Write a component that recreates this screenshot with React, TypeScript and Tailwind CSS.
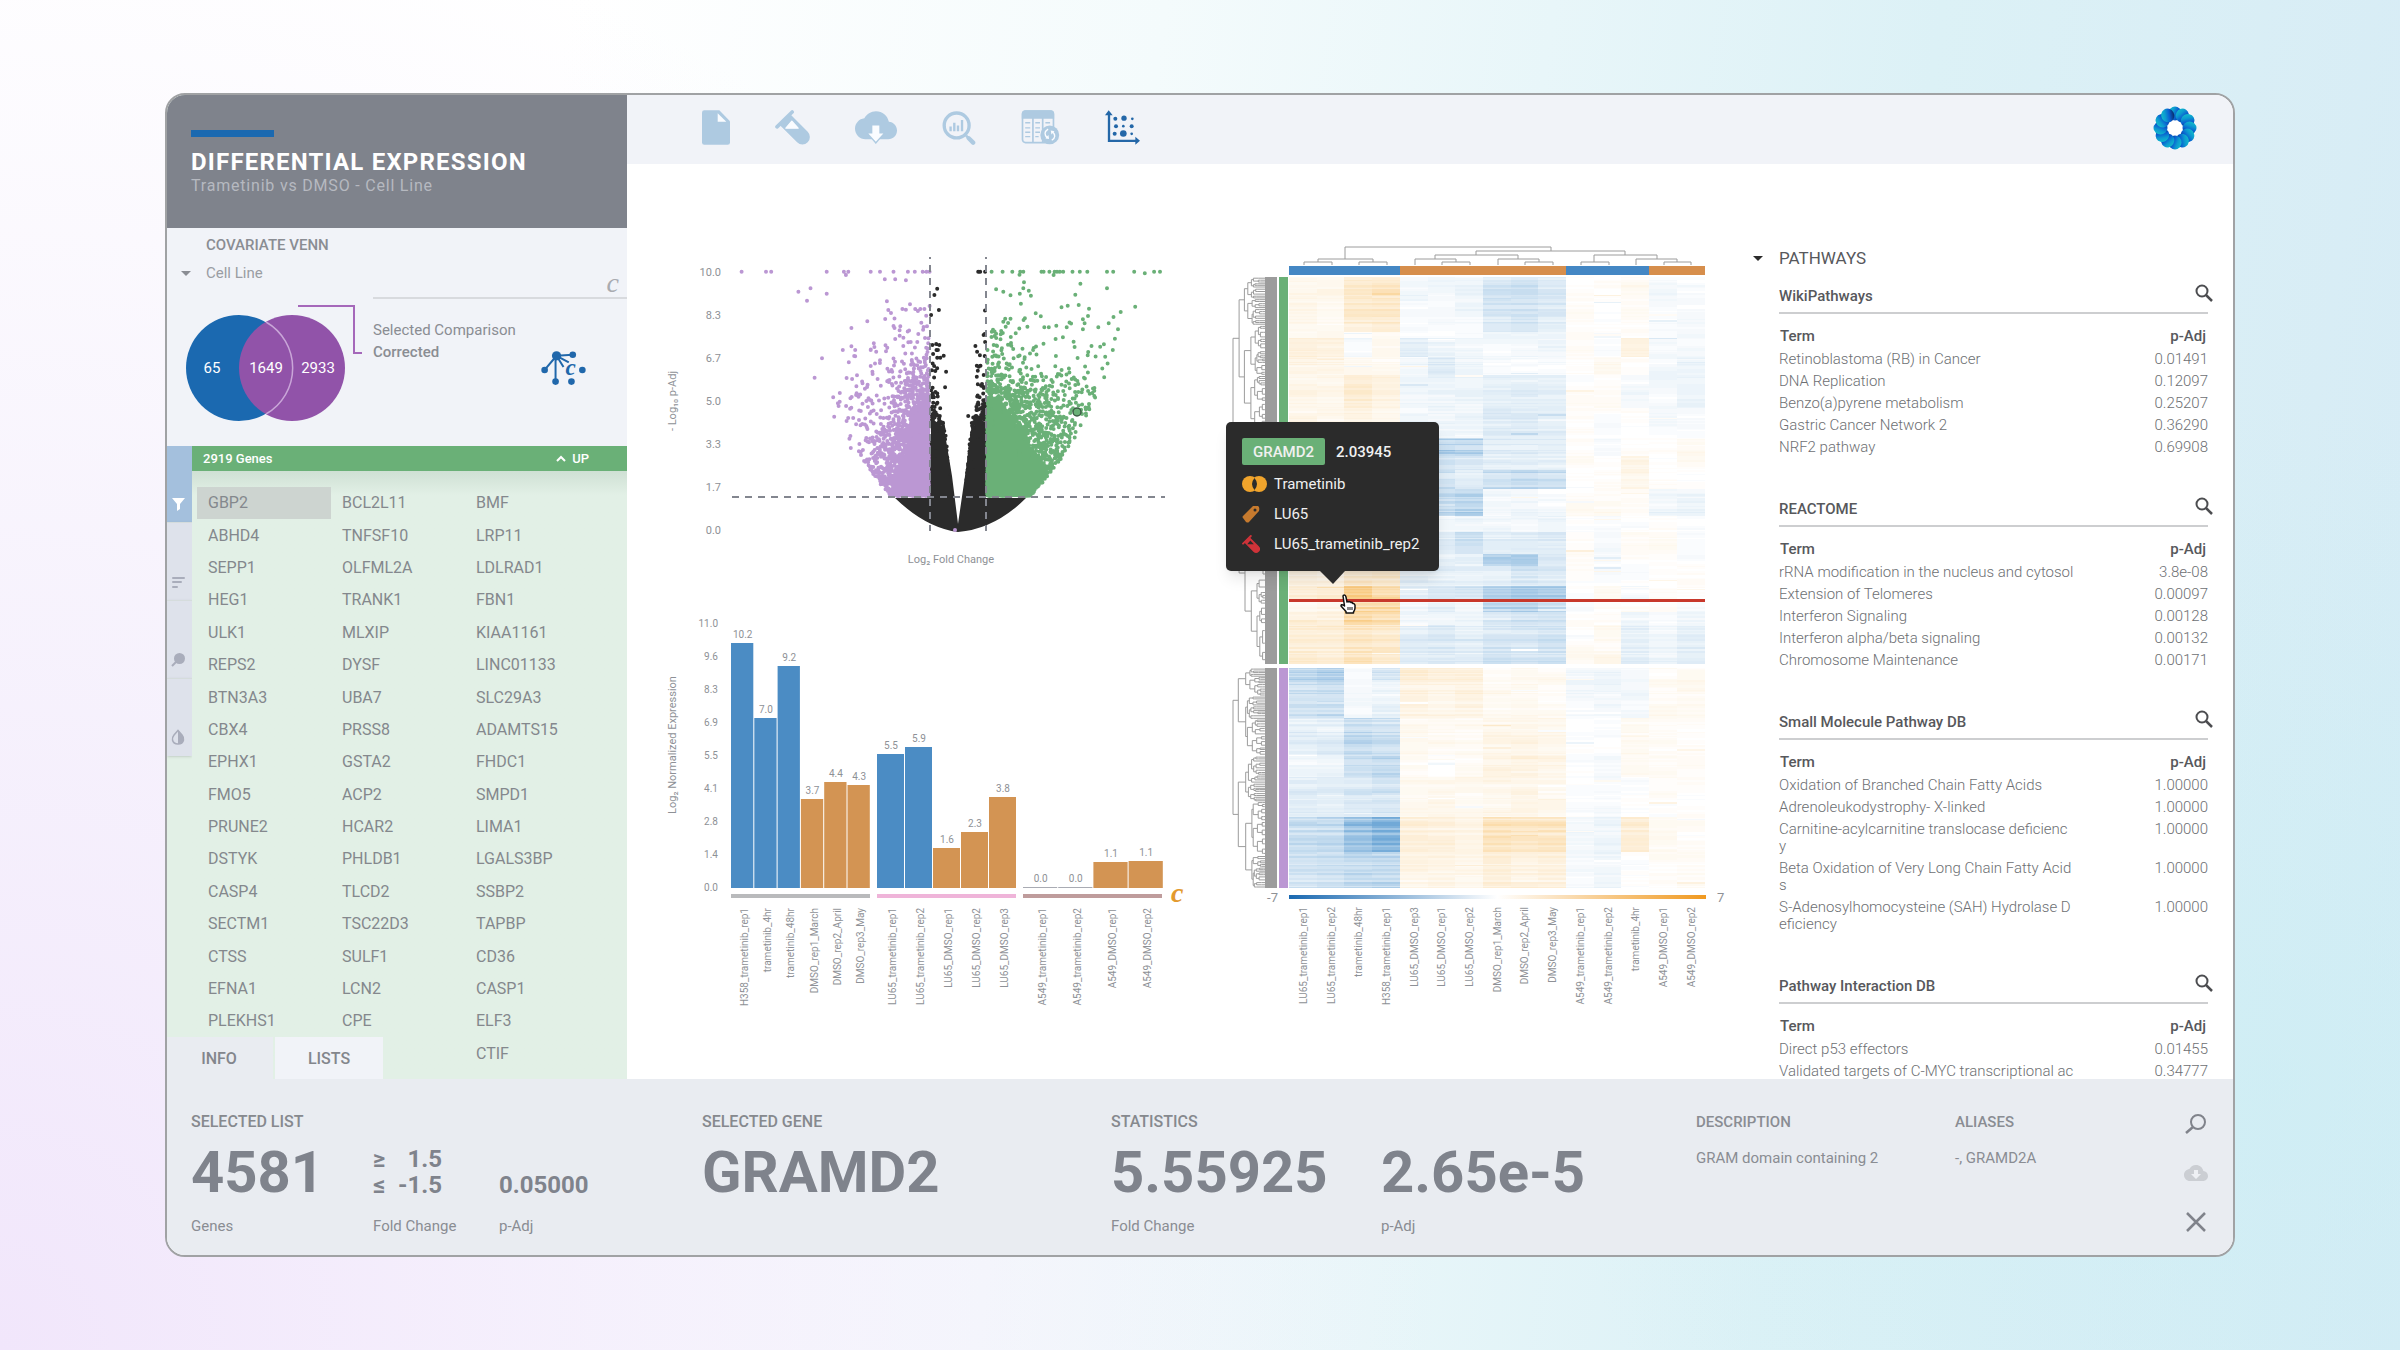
import type { ReactNode } from 'react';

/* ---------- shared ---------- */

type IconProps = { className?: string };

// Small seeded generator so that the charts are stable between renders
const createRandom = (seed: number) => {
  let state = seed;
  return () => {
    state = (state * 1664525 + 1013904223) % 4294967296;
    return state / 4294967296;
  };
};

const dotPath = (points: number[][]) =>
  points.map(([x, y]) => `M${x.toFixed(1)} ${y.toFixed(1)}h0`).join('');

/* ---------- data ---------- */

const genes = [
  ['GBP2', 'BCL2L11', 'BMF'],
  ['ABHD4', 'TNFSF10', 'LRP11'],
  ['SEPP1', 'OLFML2A', 'LDLRAD1'],
  ['HEG1', 'TRANK1', 'FBN1'],
  ['ULK1', 'MLXIP', 'KIAA1161'],
  ['REPS2', 'DYSF', 'LINC01133'],
  ['BTN3A3', 'UBA7', 'SLC29A3'],
  ['CBX4', 'PRSS8', 'ADAMTS15'],
  ['EPHX1', 'GSTA2', 'FHDC1'],
  ['FMO5', 'ACP2', 'SMPD1'],
  ['PRUNE2', 'HCAR2', 'LIMA1'],
  ['DSTYK', 'PHLDB1', 'LGALS3BP'],
  ['CASP4', 'TLCD2', 'SSBP2'],
  ['SECTM1', 'TSC22D3', 'TAPBP'],
  ['CTSS', 'SULF1', 'CD36'],
  ['EFNA1', 'LCN2', 'CASP1'],
  ['PLEKHS1', 'CPE', 'ELF3'],
  ['SLC15A3', '', 'CTIF'],
];

const pathways = [
  {
    name: 'WikiPathways',
    rows: [
      ['Retinoblastoma (RB) in Cancer', '0.01491'],
      ['DNA Replication', '0.12097'],
      ['Benzo(a)pyrene metabolism', '0.25207'],
      ['Gastric Cancer Network 2', '0.36290'],
      ['NRF2 pathway', '0.69908'],
    ],
  },
  {
    name: 'REACTOME',
    rows: [
      ['rRNA modification in the nucleus and cytosol', '3.8e-08'],
      ['Extension of Telomeres', '0.00097'],
      ['Interferon Signaling', '0.00128'],
      ['Interferon alpha/beta signaling', '0.00132'],
      ['Chromosome Maintenance', '0.00171'],
    ],
  },
  {
    name: 'Small Molecule Pathway DB',
    rows: [
      ['Oxidation of Branched Chain Fatty Acids', '1.00000'],
      ['Adrenoleukodystrophy- X-linked', '1.00000'],
      ['Carnitine-acylcarnitine translocase deficienc\ny', '1.00000'],
      ['Beta Oxidation of Very Long Chain Fatty Acid\ns', '1.00000'],
      ['S-Adenosylhomocysteine (SAH) Hydrolase D\neficiency', '1.00000'],
    ],
  },
  {
    name: 'Pathway Interaction DB',
    rows: [
      ['Direct p53 effectors', '0.01455'],
      ['Validated targets of C-MYC transcriptional ac', '0.34777'],
    ],
  },
];

/* ---------- icons ---------- */

const FileIcon = ({ className }: IconProps) => (
  <svg className={className} viewBox="0 0 84 104" fill="currentColor">
    <path d="M7 0H52L84 33V97a7 7 0 0 1-7 7H7a7 7 0 0 1-7-7V7a7 7 0 0 1 7-7z" />
    <path d="M47 9V35H73z" fill="#fafcff" />
  </svg>
);

const TubeIcon = ({ className }: IconProps) => (
  <svg className={className} viewBox="0 0 106 104" fill="currentColor">
    <path d="M6 50L52 5" stroke="currentColor" strokeWidth="11" strokeLinecap="round" />
    <path d="M15 45L47 13L99 65A22.6 22.6 0 0 1 67 97Z" />
    <path d="M33 54L51 33L70 54z" fill="#fafcff" stroke="#fafcff" strokeWidth="4" strokeLinejoin="round" />
  </svg>
);

const CloudIcon = ({ className }: IconProps) => (
  <svg className={className} viewBox="0 0 126 98" fill="currentColor">
    <path
      transform="translate(0 -21) scale(5.25)"
      d="M19.35 10.04C18.67 6.59 15.64 4 12 4 9.11 4 6.6 5.64 5.35 8.04 2.34 8.36 0 10.91 0 14c0 3.31 2.69 6 6 6h13c2.76 0 5-2.24 5-5 0-2.64-2.05-4.78-4.65-4.96z"
    />
    <path d="M40 67L62.500 94L85 67z" stroke="currentColor" strokeWidth="6" />
    <path d="M52 43H73V67H85L62.500 92L40 67H52z" fill="#fafcff" />
  </svg>
);

const AnalyzeIcon = ({ className }: IconProps) => (
  <svg className={className} viewBox="0 0 98 104" fill="none" stroke="currentColor">
    <circle cx="42" cy="46" r="37" strokeWidth="10" />
    <path d="M70 76L76 82" strokeWidth="8" />
    <path d="M78 84L91 97" strokeWidth="13" strokeLinecap="round" />
    <path d="M24 63V49M35 63V38M46 63V46M58 63V30" strokeWidth="7" />
  </svg>
);

const TableIcon = ({ className }: IconProps) => (
  <svg className={className} viewBox="0 0 113 104" fill="none" stroke="currentColor">
    <rect x="3" y="3" width="92" height="94" rx="9" strokeWidth="5" />
    <path d="M1 26V12Q1 1 12 1H86Q97 1 97 12V26z" fill="currentColor" stroke="none" />
    <path d="M34 24V97M63 24V97" strokeWidth="5" />
    <path
      d="M11 38h15M11 53h15M11 66h15M11 79h15M41 38h14M41 53h14M41 66h14M41 79h10M71 38h14"
      strokeWidth="4"
    />
    <circle cx="84" cy="74" r="28" fill="currentColor" stroke="none" />
    <path d="M79 57Q62 68 77 84M90 90Q107 79 91 63" stroke="#fafcff" strokeWidth="4" />
    <path d="M71 84L82 86L80 74zM98 63L87 61L89 73z" fill="#fafcff" stroke="none" />
  </svg>
);

const ScatterIcon = ({ className }: IconProps) => (
  <svg className={className} viewBox="0 0 105 104" fill="currentColor">
    <path d="M12 8V92H94" fill="none" stroke="currentColor" strokeWidth="7" />
    <path d="M0 15L11 0L23 15zM91 80L105 92L91 104z" />
    <circle cx="31" cy="26" r="6" />
    <circle cx="57" cy="24" r="8" />
    <circle cx="82" cy="26" r="4" />
    <circle cx="33" cy="48" r="6" />
    <circle cx="55" cy="48" r="4" />
    <circle cx="80" cy="48" r="6" />
    <circle cx="29" cy="71" r="6" />
    <circle cx="55" cy="70" r="10" />
    <circle cx="80" cy="71" r="4" />
  </svg>
);

const LogoIcon = ({ className }: IconProps) => (
  <svg className={className} viewBox="-22 -22 44 44">
    <defs>
      <linearGradient id="petal" x1="0" y1="0.200" x2="1" y2="0.600">
        <stop offset="0" stopColor="#15bfca" />
        <stop offset="0.350" stopColor="#0c9bd0" />
        <stop offset="0.650" stopColor="#0a5fd0" />
        <stop offset="1" stopColor="#0a2a66" />
      </linearGradient>
    </defs>
    <circle r="21" fill="#fff" />
    {Array.from({ length: 12 }, (_, i) => (
      <ellipse key={i} cx="0" cy="-14.500" rx="6.500" ry="7" fill="url(#petal)" transform={`rotate(${i * 30})`} />
    ))}
  </svg>
);

const NetworkIcon = ({ className }: IconProps) => (
  <svg className={className} viewBox="0 0 136 102" fill="currentColor">
    <path d="M47 14L96 11M47 14L11 57M44 14V92M47 14L68 48M47 14L84 34" fill="none" stroke="currentColor" strokeWidth="6" />
    <circle cx="47" cy="14" r="14" />
    <circle cx="96" cy="11" r="10" />
    <circle cx="11" cy="57" r="10" />
    <circle cx="44" cy="92" r="10" />
    <circle cx="92" cy="92" r="10" />
    <circle cx="125" cy="57" r="10" />
    <text x="74" y="72" fontSize="70" stroke="#f1f3f8" strokeWidth="10" paintOrder="stroke" className="[font-family:'Liberation_Serif',serif] font-bold italic">
      c
    </text>
  </svg>
);

const SearchIcon = ({ className }: IconProps) => (
  <svg className={className} viewBox="0 0 18 18" fill="none" stroke="currentColor">
    <circle cx="7" cy="7" r="5.500" strokeWidth="2" />
    <path d="M11 11L17 17" strokeWidth="2.500" />
  </svg>
);

const CaretIcon = ({ className }: IconProps) => (
  <svg className={className} viewBox="0 0 10 5" fill="currentColor">
    <path d="M0 0H10L5 5z" />
  </svg>
);

const FunnelIcon = () => (
  <svg className="h-[13px] w-[13px]" viewBox="0 0 13 13" fill="#fff">
    <path d="M0 0H13L8 6V11L5 13V6z" />
  </svg>
);

const SortIcon = () => (
  <svg className="h-[13px] w-[13px]" viewBox="0 0 13 13" fill="none" stroke="currentColor" strokeWidth="2" strokeLinecap="round">
    <path d="M1 2H12M1 6H9M1 11H5" />
  </svg>
);

const LensIcon = () => (
  <svg className="h-[14px] w-[14px]" viewBox="0 0 14 14" fill="currentColor">
    <circle cx="8.500" cy="5.500" r="5.500" />
    <path d="M5 9L1 13" stroke="currentColor" strokeWidth="2" />
  </svg>
);

const ContrastIcon = () => (
  <svg className="h-[16px] w-[14px]" viewBox="0 0 14 16">
    <path d="M7 1.500L11 6Q13 8.500 12.500 11A5.600 5 0 0 1 1.500 11Q1 8.500 3 6z" fill="none" stroke="currentColor" strokeWidth="1.500" />
    <path d="M7 1L11 6Q13 8.500 12.500 11A5.600 5 0 0 1 7 15z" fill="currentColor" />
  </svg>
);

/* ---------- volcano plot ---------- */

const fromRaw = ([x, y]: number[]) => [x / 2.904 - 10, y / 3 - 10];

const downOutliers = [
  [266, 125], [337, 125], [352, 125], [513, 125], [563, 125], [576, 125], [569, 135], [641, 125], [668, 125], [707, 125],
  [749, 125], [769, 125], [792, 125], [803, 125], [812, 125], [682, 148], [712, 148], [743, 151], [466, 175], [431, 185],
  [456, 212], [513, 191], [688, 214], [755, 223], [692, 240], [700, 249], [733, 237], [743, 239], [770, 237], [778, 243],
  [785, 237], [797, 237], [812, 228], [683, 267], [631, 274], [585, 294], [710, 294], [727, 289], [788, 278], [802, 257],
  [793, 299], [725, 317], [736, 323], [712, 327], [757, 336], [779, 312], [650, 340], [585, 349], [560, 360], [596, 379],
  [684, 346], [641, 360], [657, 365], [478, 443], [587, 447], [532, 502], [551, 515], [535, 560], [571, 573], [582, 505],
  [600, 490], [617, 460], [641, 408], [668, 391], [581, 536], [617, 521], [624, 476], [579, 626], [583, 654], [608, 642],
];

const upOutliers = [
  [992, 125], [1024, 125], [1052, 125], [1075, 125], [1084, 125], [1137, 125], [1143, 125], [1160, 125], [1175, 125],
  [1182, 125], [1190, 125], [1200, 125], [1227, 125], [1248, 125], [1270, 125], [1327, 125], [1345, 125], [1406, 125],
  [1437, 130], [1464, 125], [1481, 125], [1172, 135], [1073, 134], [1086, 157], [1084, 175], [1100, 182], [1106, 197],
  [1005, 178], [1026, 185], [1047, 196], [1074, 191], [1077, 221], [1250, 161], [1235, 194], [1327, 175], [1195, 232],
  [1213, 227], [1245, 225], [1275, 236], [1272, 258], [1257, 268], [1262, 280], [1257, 298], [1409, 230], [1367, 246],
  [1346, 261], [1332, 280], [1302, 292], [1359, 298], [1350, 326], [1318, 343], [1344, 360], [1322, 380], [1282, 348],
  [1271, 376], [1120, 250], [1135, 259], [1085, 270], [1047, 266], [1026, 275], [1033, 290], [1096, 290], [1145, 292],
  [1158, 292], [1180, 287], [1210, 292], [996, 299], [1020, 303], [1062, 310], [1199, 322], [1178, 327], [1230, 335],
];

const restOutliers = [
  [953, 125], [959, 125], [973, 125], [834, 176], [826, 195], [839, 240], [972, 312], [973, 336], [945, 348], [950, 365],
  [820, 345], [831, 342], [840, 345], [836, 360], [853, 377], [834, 383], [843, 383], [822, 372], [860, 425], [958, 376],
  [972, 378], [825, 408], [834, 415], [949, 407], [952, 422], [949, 440], [857, 472], [952, 463], [924, 558],
];

const scatter = (count: number, seed: number, spread: number, lineX: number, side: number, reach: number) => {
  const random = createRandom(seed);
  const points: number[][] = [];
  while (points.length < count) {
    const h = 36 - Math.log(1 - random()) * 56;
    const d = -Math.log(1 - random()) * (h < 130 ? spread : spread * 1.15);
    const limit = Math.min(11.9 * Math.sqrt(h), 150) * reach - 28;
    // Thins out towards the top of the plot
    const kept = random() < Math.exp((145 - h) / 35);
    if (h < 215 && d < limit && kept) points.push([lineX + side * (d + 1), 292 - h]);
  }
  return points;
};

const scatterRest = () => {
  const random = createRandom(77);
  const points: number[][] = [];
  while (points.length < 1300) {
    const h = 36 - Math.log(1 - random()) * 50;
    const inner = 4 + h * 0.085;
    const d = h < 115 ? random() : random() * random();
    const side = random() < 0.5 ? -1 : 1;
    if (random() < Math.exp((115 - h) / 25)) points.push([298 + side * (27 - d * (27 - inner)), 292 - h]);
  }
  return points;
};

const downDots = dotPath([...downOutliers.map(fromRaw), ...scatter(2300, 5, 22, 270, -1, 0.93)]);
const upDots = dotPath([...upOutliers.map(fromRaw), ...scatter(3000, 9, 38, 326, 1, 1)]);
const restDots = dotPath([...restOutliers.map(fromRaw), ...scatterRest()]);

const volcanoTicks = ['10.0', '8.3', '6.7', '5.0', '3.3', '1.7', '0.0'];

const VolcanoPlot = () => (
  <svg width="530" height="345" role="img" aria-label="Volcano plot">
    <g fontSize="11" fill="#8e9196">
      {volcanoTicks.map((tick, i) => (
        <text key={tick} x="61" y={36 + i * 43} textAnchor="end">
          {tick}
        </text>
      ))}
      <text x="291" y="323" textAnchor="middle">
        Log₂ Fold Change
      </text>
      <text transform="translate(16 161) rotate(-90)" textAnchor="middle">
        - Log₁₀ p-Adj
      </text>
    </g>
    <path
      d="M235 258Q266 288 298 292Q335 289 366 258H326V181L312 186L305 236L298 284L292 236L284 188L271 180V258z"
      fill="#2b2b2b"
    />
    <path d="M270 257H238L240 236L248 200L250 170L270 155z" fill="#bb97d3" />
    <path d="M326 257H366L388 234L375 215L362 195L350 172L326 155z" fill="#6ab077" />
    <g fill="none" strokeWidth="4" strokeLinecap="round">
      <path d={restDots} stroke="#2b2b2b" />
      <path d={downDots} stroke="#bb97d3" />
      <path d={upDots} stroke="#6ab077" />
      <path d="M295 290h0" stroke="#bb97d3" />
    </g>
    <circle cx="417" cy="172" r="4" fill="#6ab077" stroke="#3d5c45" strokeWidth="1.500" />
    <path d="M72 257H505" stroke="#83868f" strokeWidth="2" strokeDasharray="7 6" />
    <path d="M270 17V291M326 17V291" stroke="#83868f" strokeWidth="2" strokeDasharray="7 6" strokeDashoffset="5" />
  </svg>
);

/* ---------- bar chart ---------- */

type Bar = { label: string; value: string; top: number; treated?: boolean };

const barGroups: { x: number; step: number; color: string; bars: Bar[] }[] = [
  {
    x: 71,
    step: 23.3,
    color: '#b9babc',
    bars: [
      { label: 'H358_trametinib_rep1', value: '10.2', top: 58, treated: true },
      { label: 'trametinib_4hr', value: '7.0', top: 133, treated: true },
      { label: 'trametinib_48hr', value: '9.2', top: 81, treated: true },
      { label: 'DMSO_rep1_March', value: '3.7', top: 214 },
      { label: 'DMSO_rep2_April', value: '4.4', top: 197 },
      { label: 'DMSO_rep3_May', value: '4.3', top: 200 },
    ],
  },
  {
    x: 217,
    step: 28,
    color: '#efb4d9',
    bars: [
      { label: 'LU65_trametinib_rep1', value: '5.5', top: 169, treated: true },
      { label: 'LU65_trametinib_rep2', value: '5.9', top: 162, treated: true },
      { label: 'LU65_DMSO_rep1', value: '1.6', top: 263 },
      { label: 'LU65_DMSO_rep2', value: '2.3', top: 247 },
      { label: 'LU65_DMSO_rep3', value: '3.8', top: 212 },
    ],
  },
  {
    x: 363,
    step: 35.2,
    color: '#bf9c9c',
    bars: [
      { label: 'A549_trametinib_rep1', value: '0.0', top: 302, treated: true },
      { label: 'A549_trametinib_rep2', value: '0.0', top: 302, treated: true },
      { label: 'A549_DMSO_rep1', value: '1.1', top: 277 },
      { label: 'A549_DMSO_rep2', value: '1.1', top: 276 },
    ],
  },
];

const barTicks = ['11.0', '9.6', '8.3', '6.9', '5.5', '4.1', '2.8', '1.4', '0.0'];

const barFill = (bar: Bar) => {
  if (bar.value === '0.0') return '#a9abb3';
  return bar.treated ? '#4b8cc4' : '#d39453';
};

const BarChart = () => (
  <svg width="530" height="430" role="img" aria-label="Normalized expression">
    <g fontSize="10" fill="#8e9196">
      {barTicks.map((tick, i) => (
        <text key={tick} x="58" y={42 + i * 33} textAnchor="end">
          {tick}
        </text>
      ))}
      <text transform="translate(16 160) rotate(-90)" textAnchor="middle" fontSize="11">
        Log₂ Normalized Expression
      </text>
      {barGroups.map((group) => (
        <g key={group.color}>
          {group.bars.map((bar, i) => (
            <g key={bar.label}>
              <rect
                x={group.x + i * group.step}
                y={bar.top}
                width={group.step - 1}
                height={303 - bar.top}
                fill={barFill(bar)}
              />
              <text x={group.x + (i + 0.5) * group.step} y={bar.top - 5} textAnchor="middle">
                {bar.value}
              </text>
              <text
                transform={`translate(${group.x + (i + 0.5) * group.step + 5} 323) rotate(-90)`}
                textAnchor="end"
              >
                {bar.label}
              </text>
            </g>
          ))}
          <rect x={group.x} y="309" width="139" height="4" fill={group.color} />
        </g>
      ))}
    </g>
    <text x="511" y="317" fontSize="28" fill="#e39a2f" className="[font-family:'Liberation_Serif',serif] font-bold italic">
      c
    </text>
  </svg>
);

/* ---------- heat map ---------- */

const heatColumns = [
  'LU65_trametinib_rep1',
  'LU65_trametinib_rep2',
  'trametinib_48hr',
  'H358_trametinib_rep1',
  'LU65_DMSO_rep3',
  'LU65_DMSO_rep1',
  'LU65_DMSO_rep2',
  'DMSO_rep1_March',
  'DMSO_rep2_April',
  'DMSO_rep3_May',
  'A549_trametinib_rep1',
  'A549_trametinib_rep2',
  'trametinib_4hr',
  'A549_DMSO_rep1',
  'A549_DMSO_rep2',
];

// [first row, last row, fifteen levels in percent of the scale]
const heatBands: [number, number, number[]][] = [
  [37, 92, [14, 14, 36, 38, -8, -9, -10, -28, -32, -24, 4, 2, 8, -5, -6]],
  [92, 98, [14, 14, 10, 12, -8, -9, -10, -12, -12, -14, 4, 2, 4, -5, -6]],
  [98, 117, [26, 22, -5, 10, -24, -16, -12, -6, -10, -10, 5, 0, 20, -5, -5]],
  [117, 135, [22, 18, 14, 10, -8, -24, -14, -5, -5, -8, 4, 10, 0, -8, -14]],
  [135, 168, [18, 15, 30, 20, -12, -14, -12, -18, -18, -16, 0, 3, -8, -5, -10]],
  [168, 198, [16, 14, 16, 14, -8, -12, -8, -22, -20, -20, 0, 0, 0, -5, -4]],
  [198, 216, [14, 12, 14, 12, -50, -52, -50, -22, -20, -20, 3, -5, 5, 2, 8]],
  [216, 230, [14, 12, 14, 12, -20, -30, -24, -20, -16, -18, 3, 4, 16, 3, 3]],
  [230, 249, [14, 12, 14, 12, -30, -34, -16, -40, -44, -40, 3, 4, 16, 3, 3]],
  [249, 276, [14, 12, 14, 12, -34, -42, -52, -8, -10, -8, 5, 10, 3, -14, -12]],
  [276, 292, [14, 12, 14, 12, -10, -12, -12, -10, -8, -10, 0, -3, 0, 0, -3]],
  [292, 314, [14, 12, 14, 12, -10, -24, -32, -20, -22, -20, 3, -4, 4, 8, -3]],
  [314, 326, [14, 12, 14, 12, -10, -14, -12, -46, -44, -20, 3, -3, 5, 2, -3]],
  [326, 346, [22, 24, 38, 36, -20, -22, -18, -20, -30, -24, 0, -4, 3, 0, 3]],
  [346, 359, [28, 30, 82, 56, -22, -24, -30, -50, -58, -56, 4, 12, -6, 3, 0]],
  [359, 372, [14, 14, 70, 64, -10, -14, -12, -50, -52, -38, 0, 3, 6, 3, -8]],
  [372, 385, [28, 22, 66, 58, -10, -6, -14, -28, -30, -30, 5, 4, -12, -4, -14]],
  [385, 424, [32, 30, 46, 36, -20, -24, -20, -28, -28, -32, 6, 12, -18, -12, -18]],
  [428, 440, [-48, -54, -6, -30, 30, 26, 28, 9, 10, 8, -8, -10, -5, 8, 6]],
  [440, 478, [-34, -38, -6, -14, 22, 18, 20, 9, 10, 8, -8, -12, -7, 8, 10]],
  [478, 515, [-22, -20, -38, -36, 11, 11, 10, 15, 14, 14, -2, -3, 10, 4, 5]],
  [515, 537, [-12, -10, -36, -42, 8, 5, 5, 20, 20, 20, -3, -6, 4, 5, 4]],
  [537, 577, [-20, -18, -24, -28, 11, 12, 12, 16, 16, 14, -3, -5, -3, 4, 4]],
  [577, 612, [-38, -42, -66, -88, 26, 22, 18, 46, 42, 42, -8, -12, 32, 8, 6]],
  [612, 648, [-32, -34, -42, -44, 18, 18, 14, 26, 24, 24, -6, -10, 2, 5, 8]],
];

const heatWidth = 27.7;

const heatPaths = (() => {
  const random = createRandom(21);
  const buckets: Record<string, string> = {};
  const drift = heatColumns.map(() => 0);
  for (const [from, to, levels] of heatBands) {
    let y = from;
    while (y < to) {
      const height = Math.min(to - y, random() < 0.5 ? 1 : 2);
      const strength = 0.6 + random() * 0.6;
      levels.forEach((level, column) => {
        drift[column] = drift[column] * 0.75 + (random() - 0.5) * 6;
        const spike = random() < 0.02 ? (random() - 0.5) * 40 : 0;
        const raw = level * strength + drift[column] + spike;
        const value = Math.max(-90, Math.min(90, Math.round(raw / 3) * 3));
        if (value === 0) return;
        const x = 64 + column * heatWidth;
        buckets[value] = `${buckets[value] ?? ''}M${x.toFixed(1)} ${y}h${heatWidth}v${height}h-${heatWidth}z`;
      });
      y += height;
    }
  }
  return Object.entries(buckets);
})();

// Joins two clusters per level until the leaves reach the solid block
const clusterTree = (from: number, to: number, seed: number) => {
  const random = createRandom(seed);
  let path = '';
  const walk = (x: number, y0: number, y1: number): number => {
    if (y1 - y0 < 3 || x > 38) {
      path += `M${x.toFixed(1)} ${((y0 + y1) / 2).toFixed(1)}H42`;
      return (y0 + y1) / 2;
    }
    const cut = y0 + (y1 - y0) * (0.3 + random() * 0.4);
    const next = x + (y1 - y0 > 60 ? 5 + random() * 3 : 1 + random() * 4);
    const a = walk(next, y0, cut);
    const b = walk(next, cut, y1);
    path += `M${next.toFixed(1)} ${a.toFixed(1)}H${x.toFixed(1)}V${b.toFixed(1)}H${next.toFixed(1)}`;
    return (a + b) / 2;
  };
  walk(8, from, to);
  return path;
};

const upTree = clusterTree(37, 424, 12);
const downTree = clusterTree(428, 648, 31);

const columnTree = [
  'M79 25V22H107V25M134 25V22H162V25M93 22V19H148V22M120 19V7H326V11',
  'M217 25V22H245V25M190 25V19H231V22M300 25V22H328V25M273 25V19H314V22M210 19V15H293V19',
  'M356 25V22H384V25M439 25V22H466V25M411 25V19H452V22M369 22V15H432V19M251 15V11H400V15',
];

const HeatMap = () => (
  <svg width="510" height="775" role="img" aria-label="Expression heat map">
    <defs>
      <linearGradient id="scale">
        <stop offset="0" stopColor="#1a69b1" />
        <stop offset="0.500" stopColor="#ffffff" />
        <stop offset="1" stopColor="#f0991f" />
      </linearGradient>
    </defs>
    <g fill="none" stroke="#9c9c9c" strokeWidth="1">
      <path d={columnTree.join('')} />
      <path d={upTree} />
      <path d={downTree} />
    </g>
    <path d="M40 37H52V424H40zM40 428H52V648H40z" fill="#9c9c9c" />
    <rect x="54" y="37" width="9" height="387" fill="#6ab077" />
    <rect x="54" y="428" width="9" height="220" fill="#bb97d3" />
    <rect x="64" y="26" width="111" height="9" fill="#4487c4" />
    <rect x="175" y="26" width="166" height="9" fill="#d68e4c" />
    <rect x="341" y="26" width="83" height="9" fill="#4487c4" />
    <rect x="424" y="26" width="56" height="9" fill="#d68e4c" />
    <g shapeRendering="crispEdges">
      {heatPaths.map(([value, d]) => (
        <path
          key={value}
          d={d}
          fill={Number(value) > 0 ? '#f6b247' : '#3a88c8'}
          fillOpacity={(Math.abs(Number(value)) * 0.8) / 100}
        />
      ))}
    </g>
    <rect x="64" y="359" width="416" height="3" fill="#c8382b" />
    <rect x="64" y="655" width="417" height="4" fill="url(#scale)" />
    <g fill="#8e9196">
      <text x="53" y="662" fontSize="13" textAnchor="end">
        -7
      </text>
      <text x="492" y="662" fontSize="13">
        7
      </text>
      {heatColumns.map((label, i) => (
        <text key={label} transform={`translate(${64 + (i + 0.5) * heatWidth + 4} 667) rotate(-90)`} textAnchor="end" fontSize="10">
          {label}
        </text>
      ))}
    </g>
  </svg>
);

const SampleIcon = () => (
  <svg width="18" height="18" viewBox="0 0 106 104" fill="#cf3339">
    <path d="M6 50L52 5" stroke="#cf3339" strokeWidth="11" strokeLinecap="round" />
    <path d="M15 45L47 13L99 65A22.600 22.600 0 0 1 67 97Z" />
    <path d="M31 54L49 31L70 54z" fill="#2b2b2b" />
  </svg>
);

const TooltipRow = ({ icon, children }: { icon: ReactNode; children: ReactNode }) => (
  <div className="flex h-[30px] items-center">
    <span className="w-8">{icon}</span>
    {children}
  </div>
);

const HeatTooltip = () => (
  <div className="absolute top-[182px] left-[1px] h-[149px] w-[213px] rounded-[5px] bg-[#2b2b2b] pt-4 pl-4 text-[15px] leading-5 text-[#f0f0f0] shadow-lg">
    <div className="mb-1 flex items-center gap-[11px] font-medium">
      <span className="flex h-[27px] w-[83px] items-center justify-center rounded-xs bg-[#6ab077]">GRAMD2</span>
      2.03945
    </div>
    <TooltipRow
      icon={
        <svg width="25" height="16" viewBox="0 0 25 16">
          <circle cx="8" cy="8" r="8" fill="#f0a42c" />
          <circle cx="17" cy="8" r="8" fill="#f0a42c" />
          <path d="M12.500 2Q7.500 8 12.500 14Q17.500 8 12.500 2z" fill="#2b2b2b" />
        </svg>
      }
    >
      Trametinib
    </TooltipRow>
    <TooltipRow
      icon={
        <svg width="18" height="18" viewBox="0 0 18 18">
          <path d="M11 1L16 1Q18 2 17 6L7 17Q6 18 4 17L1 13Q0 12 1 11z" fill="#c67a2e" />
          <circle cx="13" cy="5" r="1.500" fill="#2b2b2b" />
        </svg>
      }
    >
      LU65
    </TooltipRow>
    <TooltipRow icon={<SampleIcon />}>LU65_trametinib_rep2</TooltipRow>
    <svg className="absolute top-full left-[94px]" width="25" height="13" viewBox="0 0 25 13">
      <path d="M0 0H25L13 13z" fill="#2b2b2b" />
    </svg>
  </div>
);

const HandCursor = () => (
  <svg className="absolute top-[354px] left-[115px]" width="16" height="20" viewBox="0 0 16 20">
    <path
      d="M3 2Q3 1 4.500 1Q5.500 1 6 3L7 8Q8 7 9 8Q10 7 11 8.500Q12 8 13 9.500Q14 9 15 11V14Q15 16 13.500 18V19H6V17.500L1 12Q1 10 3 11L4.500 12z"
      fill="#fff"
      stroke="#111"
      strokeWidth="1.500"
      strokeLinejoin="round"
    />
    <path d="M8 13V16M10 13V16M12 13V16" stroke="#111" />
  </svg>
);

/* ---------- sidebar ---------- */

const VennDiagram = () => (
  <svg width="206" height="148" role="img" aria-label="Covariate overlap">
    <circle cx="72" cy="71" r="53" fill="#1b69b0" />
    <circle cx="125" cy="71" r="53" fill="#9153a9" />
    <path d="M99 25A53 53 0 0 1 99 117" fill="none" stroke="#c9a6d8" strokeWidth="1.500" />
    <path d="M131 9H187V56H195" fill="none" stroke="#a568ba" strokeWidth="2" />
    <g fill="#fff" fontSize="15" textAnchor="middle">
      <text x="45" y="76">
        65
      </text>
      <text x="99" y="76">
        1649
      </text>
      <text x="151" y="76">
        2933
      </text>
    </g>
  </svg>
);

const railItems = [
  { name: 'Sort', icon: <SortIcon /> },
  { name: 'Search', icon: <LensIcon /> },
  { name: 'Contrast', icon: <ContrastIcon /> },
];

const Sidebar = () => (
  <aside className="relative flex w-[460px] shrink-0 flex-col overflow-hidden bg-[#e2f0e6]">
    <header className="h-[133px] shrink-0 bg-[#7f838c] pt-[35px] pl-6">
      <div className="h-[7px] w-[83px] bg-[#1b69b0]" />
      <h1 className="mt-2 text-2xl leading-[34px] font-bold tracking-wider text-white">DIFFERENTIAL EXPRESSION</h1>
      <p className="text-base leading-[14px] tracking-wider text-[#b6b9c0]">Trametinib vs DMSO - Cell Line</p>
    </header>

    {/* Covariate overlap */}
    <section className="h-[218px] shrink-0 bg-[#f1f3f8] text-[15px] text-[#8a8d93]">
      <div className="flex h-[69px] justify-between">
        <div className="pt-[3px]">
          <h2 className="pl-[39px] leading-7 font-medium">COVARIATE VENN</h2>
          <label className="flex items-center leading-7">
            <CaretIcon className="mr-[15px] ml-[14px] h-[5px] w-[10px]" />
            <select aria-label="Covariate" className="appearance-none bg-transparent text-[#9a9da3]">
              <option>Cell Line</option>
            </select>
          </label>
        </div>
        <span className="self-end pr-2 pb-[2px] [font-family:'Liberation_Serif',serif] text-[28px] leading-6 text-[#a9abb0] italic">
          c
        </span>
      </div>
      <div className="flex">
        <VennDiagram />
        <div className="flex flex-1 items-start justify-between border-t-2 border-[#d8dade] pt-5 pr-[41px] leading-[22px]">
          <p>
            Selected Comparison
            <br />
            <span className="font-medium">Corrected</span>
          </p>
          <button type="button" aria-label="Network" className="mt-[32px] text-[#2067ab]">
            <NetworkIcon className="h-[34px] w-[45px]" />
          </button>
        </div>
      </div>
    </section>

    {/* Gene list */}
    <section className="flex flex-1">
      <nav className="flex w-[25px] flex-col text-[#a9adbb]">
        <button type="button" aria-label="Filter" className="flex h-[76px] items-end justify-center bg-[#a4c0dd] pr-[3px] pb-[11px]">
          <FunnelIcon />
        </button>
        {railItems.map((item) => (
          <button
            key={item.name}
            type="button"
            aria-label={item.name}
            className="flex h-[78px] items-end justify-center border-t border-[#d5dcdc] bg-[#dee2eb] pr-[3px] pb-[11px] shadow-sm"
          >
            {item.icon}
          </button>
        ))}
      </nav>
      <div className="flex-1">
        <button
          type="button"
          className="flex h-[25px] w-full items-center justify-between bg-[#6ab077] pr-[38px] pl-[11px] text-[13px] font-medium text-white"
        >
          2919 Genes
          <span className="flex items-center gap-[6px]">
            <svg width="10" height="7" viewBox="0 0 10 7" fill="none" stroke="#fff" strokeWidth="2">
              <path d="M1 6L5 2L9 6" />
            </svg>
            UP
          </span>
        </button>
        <ul className="grid h-[599px] grid-cols-3 grid-rows-18 bg-linear-to-b from-[#cfe0d4] to-[#e2f0e6] to-4% pt-4 pr-7 pl-[5px] text-base text-[#84888d]">
          {genes.flat().map((gene, i) => (
            <li key={i} className={i === 0 ? 'flex items-center bg-[#cdd4d0] pl-[11px]' : 'flex items-center pl-[11px]'}>
              {gene}
            </li>
          ))}
        </ul>
      </div>
    </section>

    <div className="absolute bottom-0 left-0 flex gap-[2px] text-base text-[#83868c]">
      <button type="button" className="h-[42px] w-[106px] bg-[#e9ecf1] pt-[2px] pr-[2px] font-medium">
        INFO
      </button>
      <button type="button" className="h-[42px] w-[108px] bg-[#f1f3f8] pt-[2px] font-medium">
        LISTS
      </button>
    </div>
  </aside>
);

/* ---------- pathways ---------- */

const PathwayTable = ({ name, rows }: { name: string; rows: string[][] }) => (
  <section className="mb-9 text-[15px]">
    <div className="flex h-[33px] items-start justify-between border-b-2 border-[#cdced0]">
      <h3 className="pt-[3px] leading-6 font-medium text-[#57585c]">{name}</h3>
      <button type="button" aria-label={`Search ${name}`} className="-mr-[5px] pt-[3px] text-[#4c4d50]">
        <SearchIcon className="h-[18px] w-[18px]" />
      </button>
    </div>
    <table className="mt-[10px] w-full leading-[17px] text-[#6d6f73]">
      <thead className="text-[#57585c]">
        <tr>
          <th className="h-6 pl-px text-left font-medium">Term</th>
          <th className="pr-[2px] text-right font-medium">p-Adj</th>
        </tr>
      </thead>
      <tbody className="font-light">
        {rows.map(([term, value]) => (
          <tr key={term}>
            <td className="pt-[3px] pb-[2px]">
              <div className="w-[305px] whitespace-pre-line">{term}</div>
            </td>
            <td className="pt-[3px] pb-[2px] text-right align-top">{value}</td>
          </tr>
        ))}
      </tbody>
    </table>
  </section>
);

const Pathways = () => (
  <div className="min-w-0 flex-1 overflow-hidden pr-[25px] pl-[18px]">
    <h2 className="flex items-center text-[17px] leading-9 text-[#57585c]">
      <CaretIcon className="mr-4 h-[5px] w-[10px] text-[#2b2b2b]" />
      PATHWAYS
    </h2>
    <div className="mt-[5px] pl-[26px]">
      {pathways.map((pathway) => (
        <PathwayTable key={pathway.name} name={pathway.name} rows={pathway.rows} />
      ))}
    </div>
  </div>
);

/* ---------- footer ---------- */

const Figure = ({ title, value, label }: { title?: string; value: ReactNode; label?: string }) => (
  <div>
    <h3 className="h-6 text-base font-medium text-[#86898e]">{title}</h3>
    <div className="flex h-[68px] items-end pt-2 text-[58px] leading-[60px] font-bold text-[#7f838c]">{value}</div>
    <p className="mt-3 text-[15px] leading-6 text-[#8a8d93]">{label}</p>
  </div>
);

const Footer = () => (
  <footer className="grid h-[176px] shrink-0 grid-cols-[182fr_126fr_203fr_409fr_270fr_315fr_259fr_278fr] bg-[#e9ecf1] pt-[31px] pl-6">
    <Figure title="SELECTED LIST" value="4581" label="Genes" />
    <Figure
      value={
        <span className="grid grid-cols-[18px_51px] pb-1 text-2xl leading-[26px]">
          <span>≥</span>
          <span className="text-right">1.5</span>
          <span>≤</span>
          <span className="text-right">-1.5</span>
        </span>
      }
      label="Fold Change"
    />
    <Figure value={<span className="pb-1 text-2xl leading-[26px]">0.05000</span>} label="p-Adj" />
    <Figure title="SELECTED GENE" value="GRAMD2" />
    <Figure title="STATISTICS" value="5.55925" label="Fold Change" />
    <Figure value="2.65e-5" label="p-Adj" />
    <div className="text-[15px] leading-6 text-[#8a8d93]">
      <h3 className="mb-3 font-medium">DESCRIPTION</h3>
      <p>GRAM domain containing 2</p>
    </div>
    <div className="flex justify-between text-[15px] leading-6 text-[#8a8d93]">
      <div>
        <h3 className="mb-3 font-medium">ALIASES</h3>
        <p>-, GRAMD2A</p>
      </div>
      <div className="mr-[25px] flex w-6 flex-col items-center gap-[31px] pt-1">
        <button type="button" aria-label="Search gene" className="text-[#80838b]">
          <svg width="22" height="20" viewBox="0 0 22 20" fill="none" stroke="currentColor" strokeWidth="2">
            <circle cx="13" cy="8" r="7" />
            <path d="M8 13L1 19" strokeWidth="2.500" />
          </svg>
        </button>
        <button type="button" aria-label="Download" className="text-[#cbced3]">
          <svg width="24" height="16" viewBox="0 0 24 16" fill="currentColor">
            <path d="M19.350 6.040C18.670 2.590 15.640 0 12 0 9.110 0 6.600 1.640 5.350 4.040 2.340 4.360 0 6.910 0 10c0 3.310 2.690 6 6 6h13c2.760 0 5-2.240 5-5 0-2.640-2.050-4.780-4.650-4.960z" />
            <path d="M10 5H14V9H17L12 14L7 9H10z" fill="#eef0f4" />
          </svg>
        </button>
        <button type="button" aria-label="Close" className="text-[#80838b]">
          <svg width="20" height="20" viewBox="0 0 20 20" fill="none" stroke="currentColor" strokeWidth="2.500">
            <path d="M1 1L19 19M19 1L1 19" />
          </svg>
        </button>
      </div>
    </div>
  </footer>
);

/* ---------- page ---------- */

const Toolbar = () => (
  <header className="flex h-[69px] shrink-0 items-center justify-between bg-[#f1f3f8] pr-9 pb-1 pl-[75px]">
    <nav className="flex items-center gap-[45px] text-[#aecae1]">
      <button type="button" aria-label="File">
        <FileIcon className="h-[35px] w-[28px]" />
      </button>
      <button type="button" aria-label="Samples">
        <TubeIcon className="h-[35px] w-[35px]" />
      </button>
      <button type="button" aria-label="Download">
        <CloudIcon className="h-[33px] w-[42px]" />
      </button>
      <button type="button" aria-label="Analyze">
        <AnalyzeIcon className="h-[35px] w-[34px]" />
      </button>
      <button type="button" aria-label="Tables">
        <TableIcon className="h-[35px] w-[39px]" />
      </button>
      <button type="button" aria-label="Plots" className="text-[#2467a8]">
        <ScatterIcon className="h-[35px] w-[35px]" />
      </button>
    </nav>
    <a href="#home" aria-label="Home">
      <LogoIcon className="h-[44px] w-[44px]" />
    </a>
  </header>
);

export default function App() {
  return (
    <div className="flex h-screen bg-[radial-gradient(ellipse_60%_110%_at_0%_100%,#f1e6fb_0%,#f4eefccc_45%,transparent_100%),radial-gradient(ellipse_30%_50%_at_95%_80%,#c9eff488_0%,transparent_100%),linear-gradient(98deg,#ffffff_22%,#f4fbfc_45%,#dcf1f6_75%,#d6ebf5_100%)] px-[165px] py-[93px] [font-family:Roboto,sans-serif]">
      <main className="flex min-w-0 flex-1 flex-col overflow-hidden rounded-[20px] border-2 border-[#a0a2a4] bg-white">
        <div className="flex min-h-0 flex-1">
          <Sidebar />
          <div className="flex min-w-0 flex-1 flex-col">
            <Toolbar />
            <div className="flex min-h-0 flex-1 pt-[76px] pl-[33px]">
              <div className="mr-[35px] flex shrink-0 flex-col">
                <VolcanoPlot />
                <BarChart />
              </div>
              <div className="relative shrink-0">
                <HeatMap />
                <HeatTooltip />
                <HandCursor />
              </div>
              <Pathways />
            </div>
          </div>
        </div>
        <Footer />
      </main>
    </div>
  );
}
